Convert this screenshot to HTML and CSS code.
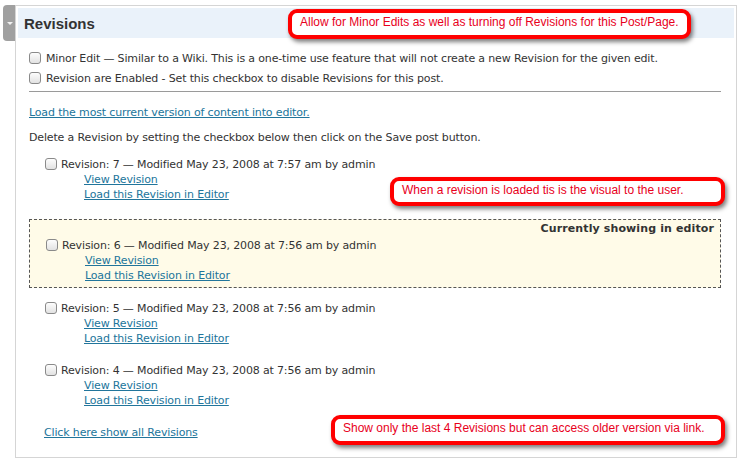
FILE: index.html
```html
<!DOCTYPE html>
<html>
<head>
<meta charset="utf-8">
<link rel="stylesheet" href="styles.css">
</head>
<body>
<div class="page">
  <div class="tab"><span class="tri"></span></div>
  <div class="box">
    <div class="hd"><h3>Revisions</h3></div>
    <div class="inside">
      <div class="opts">
        <div class="opt"><span class="cb"></span>Minor Edit — Similar to a Wiki. This is a one-time use feature that will not create a new Revision for the given edit.</div>
        <div class="opt"><span class="cb"></span>Revision are Enabled - Set this checkbox to disable Revisions for this post.</div>
      </div>
      <div class="sep"></div>
      <p class="load"><a href="#">Load the most current version of content into editor.</a></p>
      <p class="del">Delete a Revision by setting the checkbox below then click on the Save post button.</p>

      <div class="rev rev-first">
        <div class="rline"><span class="cb"></span>Revision: 7 — Modified May 23, 2008 at 7:57 am by admin</div>
        <div class="rlink"><a href="#">View Revision</a></div>
        <div class="rlink"><a href="#">Load this Revision in Editor</a></div>
      </div>

      <div class="current">
        <div class="cur-label">Currently showing in editor</div>
        <div class="rev">
          <div class="rline"><span class="cb"></span>Revision: 6 — Modified May 23, 2008 at 7:56 am by admin</div>
          <div class="rlink"><a href="#">View Revision</a></div>
          <div class="rlink"><a href="#">Load this Revision in Editor</a></div>
        </div>
      </div>

      <div class="rev rev-after">
        <div class="rline"><span class="cb"></span>Revision: 5 — Modified May 23, 2008 at 7:56 am by admin</div>
        <div class="rlink"><a href="#">View Revision</a></div>
        <div class="rlink"><a href="#">Load this Revision in Editor</a></div>
      </div>

      <div class="rev rev-next">
        <div class="rline"><span class="cb"></span>Revision: 4 — Modified May 23, 2008 at 7:56 am by admin</div>
        <div class="rlink"><a href="#">View Revision</a></div>
        <div class="rlink"><a href="#">Load this Revision in Editor</a></div>
      </div>

      <p class="all"><a href="#">Click here show all Revisions</a></p>
    </div>
  </div>

  <div class="callout c1">Allow for Minor Edits as well as turning off Revisions for this Post/Page.</div>
  <div class="callout c2">When a revision is loaded tis is the visual to the user.</div>
  <div class="callout c3">Show only the last 4 Revisions but can access older version via link.</div>
</div>
</body>
</html>
```

FILE: styles.css
```css
* { box-sizing: border-box; }
html, body { margin: 0; padding: 0; background: #fff; }
body {
  font-family: "DejaVu Sans", "Liberation Sans", sans-serif;
  font-size: 11px;
  letter-spacing: -0.15px;
  color: #333;
}
.page {
  position: relative;
  display: flex;
  align-items: flex-start;
  padding: 5px 0 0 3px;
  width: 752px;
  height: 465px;
}
.tab {
  width: 12px;
  height: 36px;
  background: #a0a0a0;
  border-radius: 4px 0 0 4px;
  display: flex;
  align-items: center;
  justify-content: center;
  padding-left: 1px;
}
.tri {
  width: 0; height: 0;
  border-left: 3px solid transparent;
  border-right: 3px solid transparent;
  border-top: 3px solid #f2f2f2;
}
.box {
  width: 722px;
  height: 453px;
  border: 1px solid #d5d5d5;
  padding: 2px;
}
.hd {
  background: #eaf2fa;
  height: 30px;
  display: flex;
  align-items: center;
  padding-left: 6px;
  padding-top: 1px;
}
.hd h3 {
  margin: 0;
  font-family: "Liberation Sans", Arial, sans-serif;
  letter-spacing: 0;
  font-size: 15px;
  font-weight: bold;
  color: #333;
}
.inside {
  padding: 10px 13px 0 11px;
}
.opt {
  display: flex;
  align-items: center;
  height: 20px;
}
.cb {
  display: inline-block;
  width: 12px;
  height: 12px;
  border: 1px solid #8a8a8a;
  border-radius: 3px;
  background: linear-gradient(#fdfdfd, #e2e2e2);
  margin-right: 5px;
  flex: none;
}
.sep {
  height: 1px;
  background: #9a9a9a;
  margin: 3px 0 0 0;
}
p { margin: 0; }
.load { margin-top: 13px; line-height: 16px; }
.del { margin-top: 9px; line-height: 16px; }
a { color: #21759b; text-decoration: underline; }
.rev { padding-left: 16px; }
.rline {
  display: flex;
  align-items: center;
  height: 16px;
}
.rline .cb { margin-right: 4px; }
.rlink {
  padding-left: 39px;
  line-height: 15px;
}
.rev-first { margin-top: 10px; }
.current {
  margin-top: 17px;
  border: 1px dashed #555;
  background: #fffbe8;
  padding: 1px 6px 4px 0;
}
.cur-label {
  text-align: right;
  font-weight: bold;
  font-size: 11px;
  letter-spacing: 0.12px;
  line-height: 15px;
}
.current .rev { margin-top: 1px; }
.rev-after { margin-top: 12px; }
.rev-next { margin-top: 16px; }
.all { margin-top: 17px; padding-left: 15px; line-height: 16px; }

.callout {
  position: absolute;
  background: #fff;
  border: 4px solid #ff0000;
  border-radius: 9px;
  box-shadow: 2px 3px 4px rgba(0,0,0,0.5);
  color: #e8001c;
  font-family: "Liberation Sans", Arial, sans-serif;
  letter-spacing: 0;
  font-size: 12px;
  line-height: 14px;
  padding: 2px 0 0 8px;
}
.c1 { left: 288px; top: 9px; width: 403px; height: 30px; }
.c2 { left: 390px; top: 177px; width: 335px; height: 29px; }
.c3 { left: 331px; top: 415px; width: 394px; height: 30px; }
```
